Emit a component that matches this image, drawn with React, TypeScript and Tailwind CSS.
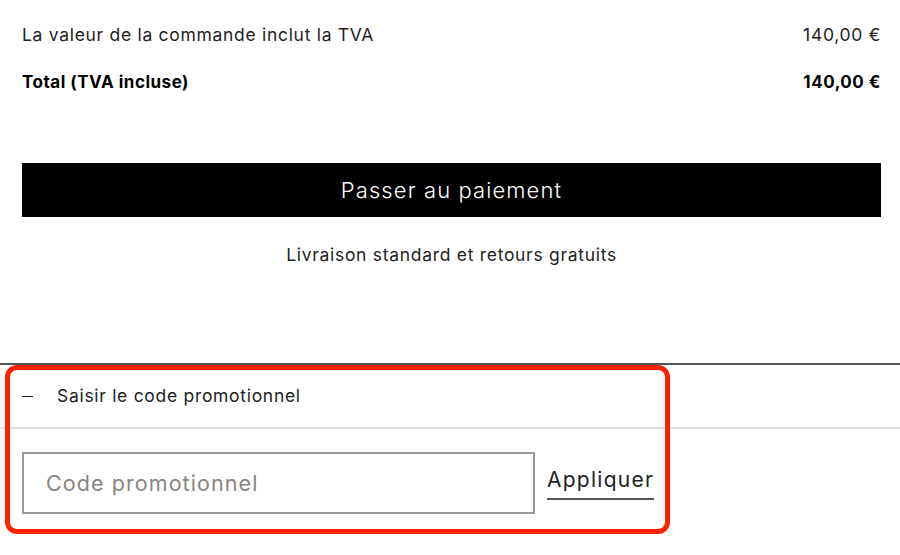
const font = { fontFamily: 'Inter, "Noto Sans", sans-serif' };

export default function App() {
  return (
    <div className="relative h-[555px] w-[900px] overflow-hidden bg-white text-black" style={font}>
      <div className="pl-[22px] pr-[19px] pt-[23px]">
        <div className="flex h-[24px] items-center justify-between text-[17.5px] tracking-[0.04em] text-[#222]">
          <span>La valeur de la commande inclut la TVA</span>
          <span>140,00 €</span>
        </div>
        <div className="mt-[24px] flex h-[24px] items-center justify-between text-[17px] font-bold tracking-[0.03em]">
          <span>Total (TVA incluse)</span>
          <span>140,00 €</span>
        </div>
        <button className="mt-[68px] flex h-[54px] w-full items-center justify-center bg-black text-[22px] font-light tracking-[0.05em] text-white">
          Passer au paiement
        </button>
        <p className="mt-[25px] text-center text-[17.5px] tracking-[0.04em] text-[#222]">
          Livraison standard et retours gratuits
        </p>
      </div>

      <div className="mt-[95px] border-t-2 border-[#555]">
        <div className="flex h-[62px] items-center px-[22px] text-[17.5px] tracking-[0.04em] text-[#222]">
          <span className="mr-[24px] h-[1.5px] w-[11px] bg-[#222]" />
          <span>Saisir le code promotionnel</span>
        </div>
        <div className="border-t-2 border-[#ddd]" />
        <div className="flex items-end gap-[12px] px-[22px] pt-[23px]">
          <input
            placeholder="Code promotionnel"
            className="h-[62px] w-[513px] border-2 border-[#999] px-[22px] text-[21.5px] tracking-[0.05em] outline-none placeholder:text-[#8a8580]"
            style={font}
          />
          <button className="mb-[14px] border-b-2 border-[#555] pb-[3px] text-[21px] tracking-[0.06em] text-[#222]">
            Appliquer
          </button>
        </div>
      </div>

      <div className="pointer-events-none absolute left-[5px] top-[365px] h-[169px] w-[665px] rounded-[12px] border-[5px] border-[#ff2200]" />
    </div>
  );
}
